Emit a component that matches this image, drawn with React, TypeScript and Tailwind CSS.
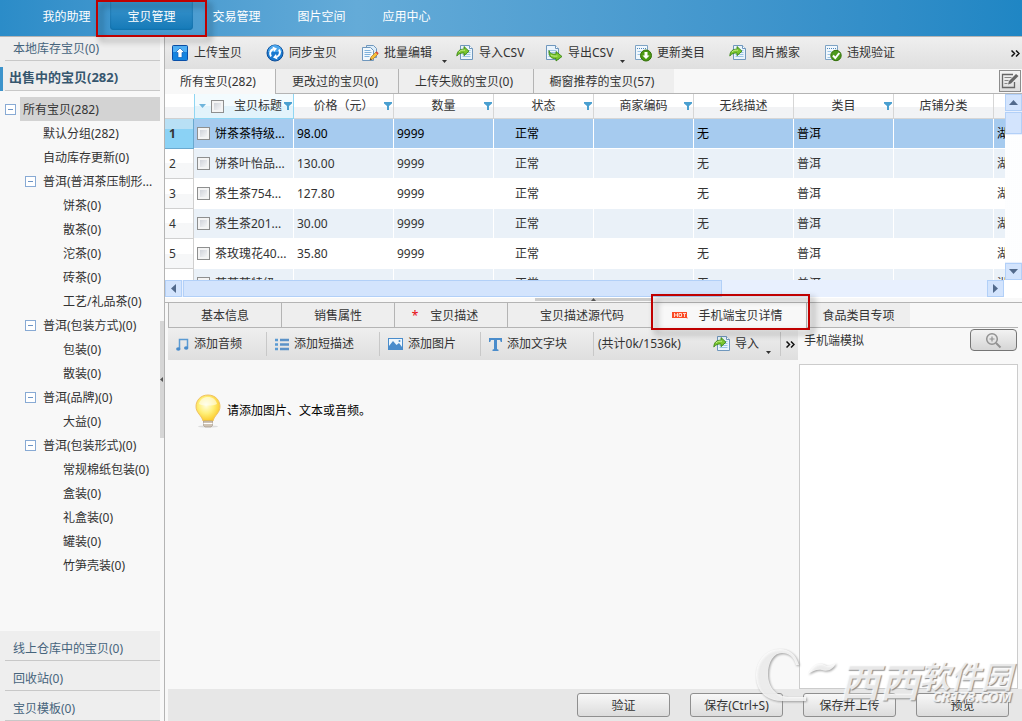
import React from 'react';
import clsx from 'clsx';

interface TreeNode {
  label: string;
  level: number;
  expandable?: boolean;
  selected?: boolean;
}

interface Product {
  title: string;
  price: string;
}

const NAV_ITEMS = ['我的助理', '宝贝管理', '交易管理', '图片空间', '应用中心'];

const TREE: TreeNode[] = [
  { label: '所有宝贝(282)', level: 0, expandable: true, selected: true },
  { label: '默认分组(282)', level: 1 },
  { label: '自动库存更新(0)', level: 1 },
  { label: '普洱(普洱茶压制形...', level: 1, expandable: true },
  { label: '饼茶(0)', level: 2 },
  { label: '散茶(0)', level: 2 },
  { label: '沱茶(0)', level: 2 },
  { label: '砖茶(0)', level: 2 },
  { label: '工艺/礼品茶(0)', level: 2 },
  { label: '普洱(包装方式)(0)', level: 1, expandable: true },
  { label: '包装(0)', level: 2 },
  { label: '散装(0)', level: 2 },
  { label: '普洱(品牌)(0)', level: 1, expandable: true },
  { label: '大益(0)', level: 2 },
  { label: '普洱(包装形式)(0)', level: 1, expandable: true },
  { label: '常规棉纸包装(0)', level: 2 },
  { label: '盒装(0)', level: 2 },
  { label: '礼盒装(0)', level: 2 },
  { label: '罐装(0)', level: 2 },
  { label: '竹笋壳装(0)', level: 2 },
];

const PRODUCTS: Product[] = [
  { title: '饼茶茶特级...', price: '98.00' },
  { title: '饼茶叶怡品...', price: '130.00' },
  { title: '茶生茶754...', price: '127.80' },
  { title: '茶生茶201...', price: '30.00' },
  { title: '茶玫瑰花40...', price: '35.80' },
  { title: '茶茶茶特级...', price: '' },
];

const COLUMNS = [
  { label: '价格（元）', filter: true },
  { label: '数量', filter: true },
  { label: '状态', filter: true },
  { label: '商家编码', filter: true },
  { label: '无线描述', filter: false },
  { label: '类目', filter: true },
  { label: '店铺分类', filter: false },
];

/* ---------- icons ---------- */

const Doc = () => (
  <>
    <path d="M2.5 1.5h9l3 3v11h-12z" fill="#eaf4fc" stroke="#6f97bd" />
    <path d="M11.5 1.5v3h3" fill="#fff" stroke="#6f97bd" />
    <path d="M4.5 6.5h8M4.5 8.5h8M4.5 10.5h8M4.5 12.5h8" stroke="#9cc4e4" />
  </>
);

const UploadIcon = () => (
  <svg width="18" height="18" viewBox="0 0 18 18" aria-hidden="true">
    <rect x="1.5" y="1.5" width="15" height="15" rx="1" fill="#1484e0" stroke="#0a4fa8" />
    <rect x="2" y="2" width="14" height="6" fill="#4fb0f5" />
    <path d="M9 4l4.500 4.500H11v5H7v-5H4.500z" fill="#fff" stroke="#0b62bd" strokeWidth=".7" />
  </svg>
);

const SyncIcon = () => (
  <svg width="18" height="18" viewBox="0 0 18 18" aria-hidden="true">
    <circle cx="9" cy="9" r="8" fill="#1a7ad0" stroke="#0d4c97" />
    <path d="M2 8a7 7 0 0 1 14 0z" fill="#4ba6ec" />
    <path d="M5 12.500C3 9.500 4.500 6 7.500 5" fill="none" stroke="#fff" strokeWidth="2" />
    <path d="M6.500 2.500L11 4.500 8 8z" fill="#fff" />
    <path d="M13 5.500c2 3 .5 6.500-2.500 7.500" fill="none" stroke="#fff" strokeWidth="2" />
    <path d="M11.500 15.500L7 13.500l3-3.500z" fill="#fff" />
  </svg>
);

const BatchEditIcon = () => (
  <svg width="18" height="18" viewBox="0 0 18 18" aria-hidden="true">
    <path d="M5.500 1.500h7l3 3v9h-10z" fill="#dcecf8" stroke="#6f97bd" />
    <path d="M1.500 3.500h8l3 3v10h-11z" fill="#f1f8fd" stroke="#6f97bd" />
    <path d="M3.500 6.500h6M3.500 8.500h7M3.500 10.500h6M3.500 12.500h5" stroke="#7fb2dc" />
    <path d="M9 16l1-3 5-5 2 2-5 5z" fill="#f5c13c" stroke="#b9761c" strokeWidth=".7" />
    <path d="M14.500 8.500l1.200-1.200 2 2-1.200 1.200z" fill="#dd4a3c" />
    <path d="M9 16l.6-1.800 1.300 1.200z" fill="#333" />
  </svg>
);

const ImportIcon = () => (
  <svg width="18" height="18" viewBox="0 0 18 18" aria-hidden="true">
    <g transform="translate(2)"><Doc /></g>
    <path d="M.8 12C1 7 4 5 8 5.200V2.500l5 4.700-5 4.500V9C5 8.800 3 9.500.8 12z" fill="#7bc62f" stroke="#2f7d0e" strokeWidth=".8" />
    <path d="M3 8c1.500-1.800 3.500-2 6-1.800" fill="none" stroke="#c8ef8c" />
  </svg>
);

const ExportIcon = () => (
  <svg width="18" height="18" viewBox="0 0 18 18" aria-hidden="true">
    <g transform="translate(-1)"><Doc /></g>
    <path d="M4 6.500c.5 3 3 4 7 3.500V7.500l6 5-6 4.500v-2.500C6 15 3.500 12 4 6.500z" fill="#7bc62f" stroke="#2f7d0e" strokeWidth=".8" />
    <path d="M6 11c1.500 1.200 4 1.300 6.500 1" fill="none" stroke="#c8ef8c" />
  </svg>
);

const UpdateIcon = () => (
  <svg width="18" height="18" viewBox="0 0 18 18" aria-hidden="true">
    <path d="M1.500 1.500h12v14h-12z" fill="#f1f8fd" stroke="#7ea3c4" />
    <path d="M3 4.500h9" stroke="#4d87bd" strokeDasharray="1 1" />
    <path d="M3.500 7.500h4M3.500 10.500h3" stroke="#9cc4e4" />
    <circle cx="12" cy="11.500" r="5.500" fill="#4c9a12" stroke="#356f0c" />
    <path d="M12 15l-3.500-3.500h2V8h3v3.500h2z" fill="#fff" />
  </svg>
);

const VerifyIcon = () => (
  <svg width="18" height="18" viewBox="0 0 18 18" aria-hidden="true">
    <path d="M1.500 1.500h12v14h-12z" fill="#f1f8fd" stroke="#7ea3c4" />
    <path d="M3 4.500h9" stroke="#4d87bd" strokeDasharray="1 1" />
    <path d="M3.500 7.500h4M3.500 10.500h3M3.500 13.500h3" stroke="#9cc4e4" />
    <circle cx="12" cy="11.500" r="5.200" fill="#4d9a1d" stroke="#356f0c" />
    <path d="M9 11.500l2.300 2.500 4-5" fill="none" stroke="#fff" strokeWidth="2" />
  </svg>
);

const MusicIcon = () => (
  <svg width="13" height="13" viewBox="0 0 13 13" aria-hidden="true">
    <path d="M3.500 10.500V1.500h8v8" fill="none" stroke="#5b9bd3" strokeWidth="1.500" />
    <ellipse cx="2.300" cy="11" rx="2.200" ry="1.700" fill="#4a8ccb" />
    <ellipse cx="10.200" cy="10" rx="2.200" ry="1.700" fill="#4a8ccb" />
  </svg>
);

const ListIcon = () => (
  <svg width="14" height="13" viewBox="0 0 14 13" aria-hidden="true">
    <path d="M0 2h3M0 6.500h3M0 11h3" stroke="#5b9bd3" strokeWidth="2.500" />
    <path d="M5 2h9M5 6.500h9M5 11h9" stroke="#5b92c8" strokeWidth="2.500" />
  </svg>
);

const PictureIcon = () => (
  <svg width="15" height="12" viewBox="0 0 15 12" aria-hidden="true">
    <rect x=".5" y=".5" width="14" height="11" fill="#eef6fc" stroke="#4a8ccb" />
    <path d="M1 11V8l4-5 3.500 4L11 5l3 4v2z" fill="#4a8ccb" />
    <circle cx="11.500" cy="3" r="1" fill="#4a8ccb" />
  </svg>
);

const TextIcon = () => (
  <svg width="13" height="13" viewBox="0 0 13 13" aria-hidden="true">
    <path d="M0 0h13v4h-1.200L11 2H8v9l1.500.8V13h-6v-1.200L5 11V2H2l-.8 2H0z" fill="#4a8ccb" />
  </svg>
);

const FilterIcon = () => (
  <svg width="8" height="8" viewBox="0 0 8 8" aria-hidden="true">
    <path d="M0 0h8v1.500L5 4v4H3V4L0 1.500z" fill="#4a9fd0" />
  </svg>
);

const EditNoteIcon = () => (
  <svg width="18" height="18" viewBox="0 0 18 18" aria-hidden="true">
    <path d="M12 2.500H1.500v13h12V10" fill="none" stroke="#666" strokeWidth="1.300" />
    <path d="M3.500 5.500h7M3.500 8.500h4M3.500 11.500h3" stroke="#888" />
    <path d="M7 12.500l1-3.500L15 2l2.500 2L10 11.500z" fill="#666" />
  </svg>
);

const MagnifyIcon = () => (
  <svg width="17" height="17" viewBox="0 0 17 17" aria-hidden="true">
    <circle cx="7" cy="7" r="5.300" fill="none" stroke="#929292" strokeWidth="1.500" />
    <path d="M11 11l4.500 4.500" stroke="#929292" strokeWidth="2" />
    <path d="M4.500 7h5M7 4.500v5" stroke="#929292" strokeWidth="1.200" />
  </svg>
);

const BulbIcon = () => (
  <svg width="26" height="34" viewBox="0 0 26 34" aria-hidden="true">
    <defs>
      <radialGradient id="bulb" cx=".42" cy=".4" r=".62">
        <stop offset="0" stopColor="#fffde0" />
        <stop offset=".5" stopColor="#fff07a" />
        <stop offset="1" stopColor="#fbc928" />
      </radialGradient>
    </defs>
    <ellipse cx="13" cy="32.500" rx="10" ry="1" fill="#ddd" />
    <path d="M13 1C5.500 1 1 6.500 1 12.500c0 6.500 5.500 8.500 7 14.500h10c1.500-6 7-8 7-14.500C25 6.500 20.500 1 13 1z" fill="url(#bulb)" stroke="#f0c263" />
    <path d="M4 10c1-4.500 4.500-7 9-7s8 2.500 9 7c-4 2-14 2-18 0z" fill="#fff" opacity=".55" />
    <path d="M8.500 27h9v4.500l-1.500 1.500h-6l-1.500-1.500z" fill="#cfc3b4" stroke="#9d9185" strokeWidth=".6" />
    <path d="M8.500 29.500h9" stroke="#fff" />
  </svg>
);

const HotIcon = () => (
  <svg width="16" height="7" viewBox="0 0 16 7" aria-hidden="true">
    <path d="M0 0h15v5l1 1.500L14 6H0z" fill="#fb4a25" />
    <path d="M2.500 1v4M5.500 1v4M2.500 3h3M7 1.500h2.500v3H7zM11 1.500h3M12.500 1.500V5" fill="none" stroke="#ffd9cc" />
  </svg>
);

const Triangle = ({ dir, className = '' }: { dir: 'up' | 'down' | 'left' | 'right'; className?: string }) => (
  <svg
    width="9"
    height="9"
    viewBox="0 0 9 9"
    aria-hidden="true"
    className={clsx(className, dir === 'down' && 'rotate-180', dir === 'left' && '-rotate-90', dir === 'right' && 'rotate-90')}
  >
    <path d="M0 7l4.500-5L9 7z" fill="currentColor" />
  </svg>
);

const SmallArrow = () => (
  <svg width="5" height="3" viewBox="0 0 5 3" aria-hidden="true" className="absolute right-[9px] bottom-1.5">
    <path d="M0 0h5L2.500 3z" fill="#333" />
  </svg>
);

const Chevrons = () => (
  <svg width="9" height="7" viewBox="0 0 9 7" aria-hidden="true">
    <path d="M.5.5l3 3-3 3M5 .5l3 3-3 3" fill="none" stroke="#111" strokeWidth="1.500" />
  </svg>
);

/* ---------- shared parts ---------- */

const CheckBox = ({ label }: { label: string }) => (
  <input
    type="checkbox"
    aria-label={label}
    className="block size-[13px] shrink-0 appearance-none border border-[#8e8f8f] bg-linear-to-br from-[#c6cad2] to-white shadow-[inset_0_0_0_2px_#f4f4f4]"
  />
);

// callout frame drawn over a tab
const RedFrame = ({ className }: { className: string }) => (
  <span className={clsx('pointer-events-none absolute z-20 border-2 border-[#c00000] drop-shadow-[4px_4px_3px_rgba(0,0,0,0.45)]', className)} />
);

const TOOLS = [
  { label: '上传宝贝', icon: <UploadIcon />, width: 'w-[95px]' },
  { label: '同步宝贝', icon: <SyncIcon />, width: 'w-[95px]' },
  { label: '批量编辑', icon: <BatchEditIcon />, width: 'w-[95px]', menu: true },
  { label: '导入CSV', icon: <ImportIcon />, width: 'w-[89px]' },
  { label: '导出CSV', icon: <ExportIcon />, width: 'w-[89px]', menu: true },
  { label: '更新类目', icon: <UpdateIcon />, width: 'w-[95px]' },
  { label: '图片搬家', icon: <ImportIcon />, width: 'w-[95px]' },
  { label: '违规验证', icon: <VerifyIcon />, width: 'w-[95px]' },
];

const LIST_TABS = [
  { label: '所有宝贝(282)', width: 'w-[111px]' },
  { label: '更改过的宝贝(0)', width: 'w-[123px]' },
  { label: '上传失败的宝贝(0)', width: 'w-[135px]' },
  { label: '橱窗推荐的宝贝(57)', width: 'w-[140px]' },
];

const EDIT_TOOLS = [
  { label: '添加音频', icon: <MusicIcon />, width: 'w-[99px]' },
  { label: '添加短描述', icon: <ListIcon />, width: 'w-[113px]' },
  { label: '添加图片', icon: <PictureIcon />, width: 'w-[101px]' },
  { label: '添加文字块', icon: <TextIcon />, width: 'w-[113px]' },
];

const Header = () => (
  <header className="h-[37px] shrink-0 border-b border-[#b4b4b4] bg-linear-to-r from-[#2b8cc8] via-[#64abd8] via-35% to-[#1f86c4]">
    <nav className="flex h-9 pl-[25px]">
      {NAV_ITEMS.map((item, i) => (
        <div key={item} className="relative w-[85px]">
          <button
            className={clsx(
              'h-[30px] w-[83px] pt-1 text-white',
              i === 1 && 'rounded-b bg-linear-to-b from-[#3b97cf] to-[#147ab8] shadow-[inset_0_0_2px_#0d5f94]',
            )}
          >
            {item}
          </button>
          {i === 1 && <RedFrame className="top-0 -left-3.5 h-[37px] w-[111px]" />}
        </div>
      ))}
    </nav>
  </header>
);

const Sidebar = () => (
  <aside className="flex w-[165px] shrink-0 border-r border-[#b4b4b4]">
    <div className="flex w-40 flex-col">
      <div className="bg-[#eee] text-[#46647c]">
        <div className="ml-[5px] h-6 border-b border-[#c8c8c8] pl-2">
          <a href="#local" className="leading-6">本地库存宝贝(0)</a>
        </div>
        <div className="flex h-[30px] pt-1.5">
          <span className="w-[3px] bg-[#3c93cb]" />
          <a href="#selling" className="ml-0.5 flex-1 border-b border-[#c8c8c8] pl-1 text-[13px] leading-5 font-bold text-[#36566e]">
            出售中的宝贝(282)
          </a>
        </div>
      </div>
      <ul className="flex-1 overflow-hidden pt-1.5">
        {TREE.map((node, i) => (
          <li
            key={i}
            className={clsx('flex h-6 items-center', node.level === 0 && 'pl-[5px]', node.level === 1 && 'pl-[25px]', node.level === 2 && 'pl-[45px]')}
          >
            <span className="flex w-[15px] shrink-0">
              {node.expandable && (
                <button aria-label="收起" className="flex size-[11px] items-center justify-center border border-[#88aad4] bg-white">
                  <span className="h-px w-[5px] bg-[#6d94c4]" />
                </button>
              )}
            </span>
            <span className={clsx('flex h-6 flex-1 items-center pt-0.5 pl-[3px] whitespace-nowrap', node.selected && 'bg-[#d3d3d3]')}>{node.label}</span>
          </li>
        ))}
      </ul>
      <div className="bg-[#eee] pl-[5px] text-[#46647c]">
        {['线上仓库中的宝贝(0)', '回收站(0)', '宝贝模板(0)'].map((t) => (
          <div key={t} className="flex h-[30px] items-center border-b border-[#c8c8c8] pt-1.5 pl-2">
            <a href="#folder">{t}</a>
          </div>
        ))}
      </div>
    </div>
    <div className="flex w-1 flex-col justify-center">
      <div className="flex h-[117px] items-center bg-[#d6d6d6] text-[#555]">
        <svg width="3" height="5" viewBox="0 0 3 5" aria-hidden="true">
          <path d="M3 0v5L0 2.500z" fill="currentColor" />
        </svg>
      </div>
    </div>
  </aside>
);

const ProductGrid = () => (
  <div className="flex h-[186px] shrink-0 bg-white">
    <div className="min-w-0 flex-1 overflow-hidden">
      <table className="w-[929px] table-fixed border-separate border-spacing-0 text-left">
        <colgroup>
          <col className="w-[29px]" />
          {Array.from({ length: 9 }, (_, i) => (
            <col key={i} className="w-[100px]" />
          ))}
        </colgroup>
        <thead>
          <tr className="h-[25px] bg-linear-to-b from-white from-50% to-[#f2f3f5] to-50%">
            <th className="border-b border-[#d0d0d0] p-0" />
            <th className="border-x border-b border-[#8fd6f3] bg-linear-to-b from-[#f3fbfe] from-50% to-[#e2f3fb] to-50% p-0 font-normal">
              <div className="flex items-center justify-end pr-px">
                <svg width="7" height="4" viewBox="0 0 7 4" aria-hidden="true" className="mr-[5px]">
                  <path d="M0 0h7L3.500 4z" fill="#6fb5dc" />
                </svg>
                <CheckBox label="全选" />
                <span className="mr-0.5 ml-2.5 whitespace-nowrap">宝贝标题</span>
                <FilterIcon />
              </div>
            </th>
            {COLUMNS.map((c) => (
              <th key={c.label} className="relative border-r border-b border-[#d6d6d6] p-0 text-center font-normal">
                {c.label}
                {c.filter && (
                  <span className="absolute top-2 right-px">
                    <FilterIcon />
                  </span>
                )}
              </th>
            ))}
            <th className="border-b border-[#d6d6d6] p-0" />
          </tr>
        </thead>
        <tbody>
          {PRODUCTS.map((p, i) => {
            const cell = clsx(
              'border-r border-b border-white p-0 pl-[3px]',
              i === 0 ? 'bg-[#a6cbef] text-black' : i % 2 ? 'bg-[#eaf1f8]' : 'bg-white',
            );
            return (
              <tr key={i} className="h-[30px]">
                <td
                  className={clsx(
                    'border-r border-b p-0 pl-1',
                    i === 0
                      ? 'border-[#6aa9cf] bg-linear-to-b from-[#b8e0f5] from-35% to-[#8bd2f5] to-35% font-bold'
                      : 'border-[#d0d0d0] bg-linear-to-b from-white from-50% to-[#f6f7f8] to-50%',
                  )}
                >
                  {i < 5 ? i + 1 : ''}
                </td>
                <td className={cell}>
                  <div className="flex items-center gap-[5px] overflow-hidden whitespace-nowrap">
                    <CheckBox label={p.title} />
                    {p.title}
                  </div>
                </td>
                <td className={cell}>{p.price}</td>
                <td className={cell}>{p.price && '9999'}</td>
                <td className={cell}>
                  <span className="pl-[18px]">正常</span>
                </td>
                <td className={cell} />
                <td className={cell}>无</td>
                <td className={cell}>普洱</td>
                <td className={cell} />
                <td className={cell}>湖南</td>
              </tr>
            );
          })}
        </tbody>
      </table>
    </div>
    <div className="flex w-[17px] flex-col gap-px bg-[#e8f0fe] text-[#526a8c]">
      <button aria-label="向上" className="flex h-[17px] items-center justify-center border border-[#b2d0f8] bg-[#d3e4fd]">
        <Triangle dir="up" />
      </button>
      <div className="h-[22px] border border-[#b2d0f8] bg-[#d3e4fd]" />
      <div className="flex-1 bg-[radial-gradient(#fff_0.7px,transparent_0.8px)] bg-size-[2px_2px]" />
      <button aria-label="向下" className="flex h-[17px] items-center justify-center border border-[#b2d0f8] bg-[#d3e4fd]">
        <Triangle dir="down" />
      </button>
    </div>
  </div>
);

const HScrollBar = () => (
  <div className="flex h-[18px] shrink-0 bg-white pr-[18px] pb-px text-[#526a8c]">
    <button aria-label="向左" className="flex w-[17px] items-center justify-center border border-[#b2d0f8] bg-[#d3e4fd]">
      <Triangle dir="left" />
    </button>
    <div className="flex-1 bg-[#e8f0fe] pl-px">
      <div className="h-[17px] w-[67%] border border-[#b2d0f8] bg-[#d3e4fd]" />
    </div>
    <button aria-label="向右" className="flex w-[17px] items-center justify-center border border-[#b2d0f8] bg-[#d3e4fd]">
      <Triangle dir="right" />
    </button>
  </div>
);

const DetailTabs = () => {
  const tab = 'h-full shrink-0 border-b border-[#b4b4b4] bg-[#eee] pt-0.5';
  return (
    <div className="ml-[3px] flex h-[25px] shrink-0">
      <button className={clsx(tab, 'w-[114px] border-x')}>基本信息</button>
      <button className={clsx(tab, 'w-[113px] border-r')}>销售属性</button>
      <button className={clsx(tab, 'flex w-[113px] items-center justify-center gap-3 border-r pr-3')}>
        <span className="text-red-600">*</span>宝贝描述
      </button>
      <button className={clsx(tab, 'w-[145px] border-r pl-1')}>宝贝描述源代码</button>
      <div className="relative w-[154px] shrink-0 border-r border-[#b4b4b4]">
        <button className="flex h-full w-full items-center justify-center gap-2.5 pr-1">
          <HotIcon />
          手机端宝贝详情
        </button>
        <RedFrame className="-top-[9px] -left-0.5 h-9 w-[159px]" />
      </div>
      <button className={clsx(tab, 'w-[103px]')}>食品类目专项</button>
      <div className="mr-1 flex-1 border-b border-[#b4b4b4]" />
    </div>
  );
};

const MobileEditor = () => (
  <section className="flex min-w-0 flex-1 flex-col">
    <div className="flex h-8 items-center bg-linear-to-b from-[#efefef] to-[#dfdfdf] whitespace-nowrap">
      {EDIT_TOOLS.map((t) => (
        <button key={t.label} className={clsx('flex h-6 shrink-0 items-center gap-[5px] border-r border-[#c8c8c8] pl-2', t.width)}>
          {t.icon}
          {t.label}
        </button>
      ))}
      <span className="flex-1 pl-1">(共计0k/1536k)</span>
      <button className="relative flex h-8 w-[68px] shrink-0 items-center gap-1 pl-px">
        <ImportIcon />
        导入
        <SmallArrow />
      </button>
      <span className="flex h-6 items-center border-l border-[#c8c8c8] pr-[3px] pl-[5px]">
        <Chevrons />
      </span>
    </div>
    <div className="flex items-center gap-1.5 pt-[34px] pl-[27px] text-black">
      <BulbIcon />
      请添加图片、文本或音频。
    </div>
  </section>
);

// embossed site mark in the lower right corner
const Watermark = () => (
  <div className="pointer-events-none absolute right-2.5 bottom-[19px] z-10 flex items-end font-bold whitespace-nowrap text-white/80 italic [text-shadow:1px_1px_1px_#8a8a8a]">
    <svg width="84" height="54" viewBox="0 0 84 54" aria-hidden="true" className="drop-shadow-[1px_1px_1px_#888]">
      <path
        d="M44 17C41 6 34 1 25 1 10 1 1 14 1 27c0 16 10 26 26 26h24v-4H35C22 49 13 40 13 26 13 14 19 5 27 5c7 0 12 4 14 12z"
        fill="#fff"
        fillOpacity=".8"
      />
      <path d="M53 26c5-10 11-12 17-9 4 2 7 0 11-2-3 7-9 9-14 7-5-1-9 1-14 4z" fill="#fff" fillOpacity=".8" />
    </svg>
    <span className="text-[40px] leading-10">西西</span>
    <div className="flex flex-col items-end">
      <span className="text-[31px] leading-7">软件园</span>
      <span className="text-[15px] leading-3">CR173.COM</span>
    </div>
  </div>
);

const App: React.FC = () => (
  <div className="relative flex h-screen flex-col overflow-hidden bg-[#f8f8f8] font-['Noto_Sans','Noto_Sans_CJK_SC',sans-serif] text-[12px] leading-4 text-[#333]">
    <Header />
    <div className="flex min-h-0 flex-1">
      <Sidebar />
      <main className="flex min-w-0 flex-1 flex-col">
        <div className="flex h-8 shrink-0 items-center bg-linear-to-b from-[#efefef] to-[#dfdfdf] pl-1.5 whitespace-nowrap">
          {TOOLS.map((t) => (
            <button key={t.label} className={clsx('relative flex h-8 shrink-0 items-center gap-[5px]', t.width)}>
              {t.icon}
              {t.label}
              {t.menu && <SmallArrow />}
            </button>
          ))}
          <span className="mr-0.5 ml-auto">
            <Chevrons />
          </span>
        </div>
        <div className="flex h-[25px] shrink-0">
          {LIST_TABS.map((t, i) => (
            <button
              key={t.label}
              className={clsx(
                'h-full border-[#b4b4b4] pr-1',
                t.width,
                i === 0 ? 'bg-[#f8f8f8]' : 'border-b bg-[#eee] pt-px',
                i < 3 && 'border-r',
              )}
            >
              {t.label}
            </button>
          ))}
          <div className="flex flex-1 justify-end border-b border-[#b4b4b4] pt-px pr-px">
            <button aria-label="编辑列" className="flex size-[22px] items-center justify-center border border-[#8c8c8c] bg-linear-to-b from-[#f4f4f4] to-[#ddd]">
              <EditNoteIcon />
            </button>
          </div>
        </div>
        <ProductGrid />
        <HScrollBar />
        <div className="flex h-[5px] shrink-0 justify-center border-b border-[#b4b4b4]">
          <div className="flex h-[3px] w-[117px] items-center justify-center bg-[#ccc]">
            <svg width="5" height="3" viewBox="0 0 5 3" aria-hidden="true">
              <path d="M0 3l2.500-3L5 3z" fill="#555" />
            </svg>
          </div>
        </div>
        <DetailTabs />
        <div className="ml-[3px] flex min-h-0 flex-1">
          <MobileEditor />
          <section className="flex w-[224px] shrink-0 flex-col pr-1">
            <div className="flex h-9 items-start justify-between pt-px pl-1.5">
              <span className="pt-1">手机端模拟</span>
              <button aria-label="放大" className="mr-px flex h-[22px] w-[47px] items-center justify-center rounded-sm border border-[#757575] bg-linear-to-b from-[#f2f2f2] to-[#d6d6d6]">
                <MagnifyIcon />
              </button>
            </div>
            <div className="ml-px flex-1 border border-[#ccc] bg-white" />
          </section>
        </div>
        <footer className="ml-[3px] flex h-8 shrink-0 items-start justify-end gap-5 bg-[#e7e7e7] pt-1 pr-[13px]">
          {['验证', '保存(Ctrl+S)', '保存并上传', '预览'].map((t) => (
            <button key={t} className="h-6 w-[93px] rounded-[3px] border border-[#8f8f8f] bg-linear-to-b from-[#f8f8f8] to-[#dcdcdc] pt-px">
              {t}
            </button>
          ))}
        </footer>
      </main>
    </div>
    <Watermark />
  </div>
);

export default App;
